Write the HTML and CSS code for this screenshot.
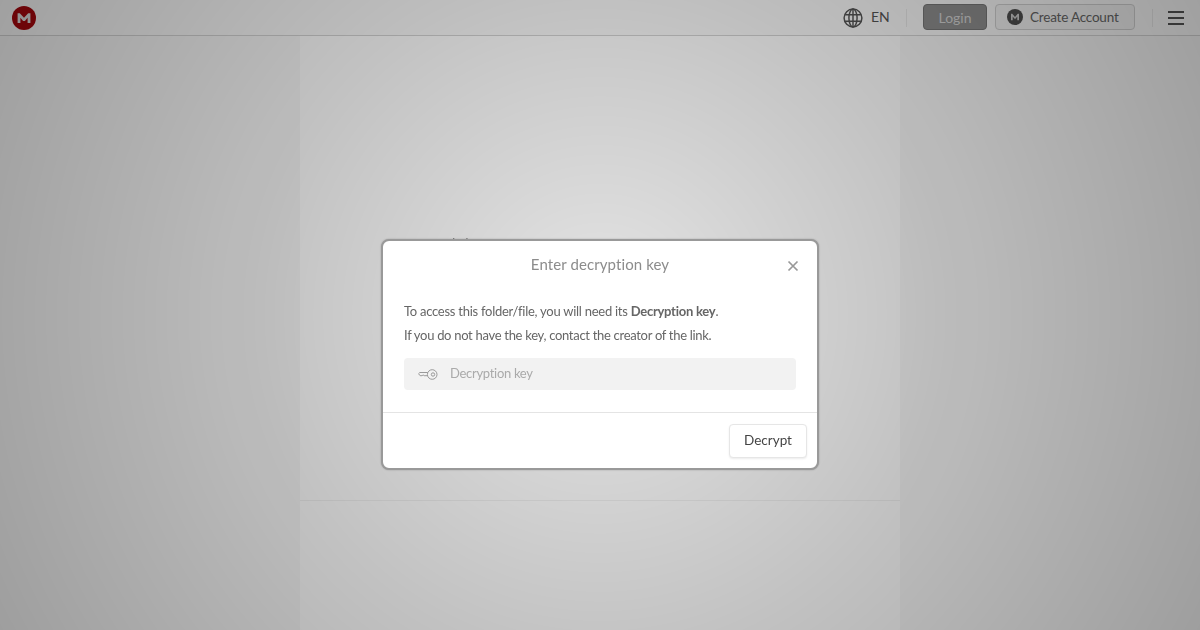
FILE: index.html
```html
<!DOCTYPE html>
<html lang="en">
<head>
<meta charset="utf-8">
<title>Enter decryption key</title>
<link rel="stylesheet" href="styles.css">
</head>
<body>
<div class="page">
  <header class="topbar">
    <svg class="logo" viewBox="0 0 24 24" width="24" height="24"><circle cx="12" cy="12" r="12" fill="#a8090f"/><path d="M5.600 17V7.200h2.200L12 11.800l4.200-4.600h2.200V17h-2.800v-5.200L12.900 15h-1.800l-2.700-3.200V17z" fill="#e0e0e0"/></svg>
    <div class="topbar-right">
      <svg class="globe" viewBox="0 0 22 22" width="20" height="20" fill="none" stroke="#555" stroke-width="1.600"><circle cx="11" cy="11" r="9.800"/><ellipse cx="11" cy="11" rx="4.500" ry="9.800"/><path d="M11 1.200v19.600M2.300 7.500h17.400M2.300 14.500h17.400"/></svg>
      <span class="lang">EN</span>
      <span class="sep sep-a"></span>
      <button class="btn-login">Login</button>
      <button class="btn-create"><svg viewBox="0 0 16 16" width="16" height="16"><circle cx="8" cy="8" r="8" fill="#4f4f4f"/><path d="M4 11.200V4.800h1.300L8 7.900l2.700-3.100H12v6.400h-1.700V7.500L8.500 9.800h-1L5.700 7.500v3.700z" fill="#ccc"/></svg>Create Account</button>
      <span class="sep sep-b"></span>
      <div class="burger"><i></i><i></i><i></i></div>
    </div>
  </header>
  <main class="content">
    <div class="column"><div class="column-top"></div><div class="column-bottom"></div></div>
  </main>
</div>
<span class="behind-title">ll</span>
<div class="overlay"></div>
<div class="modal">
  <div class="modal-head">
    <h2>Enter decryption key</h2>
    <svg class="close" viewBox="0 0 12 12" width="12" height="12" fill="none" stroke="#999" stroke-width="1.700"><path d="M1.500 1.500l9 9M10.500 1.500l-9 9"/></svg>
  </div>
  <div class="modal-body">
    <p>To access this folder/file, you will need its <b>Decryption key</b>.</p>
    <p class="line-two">If you do not have the key, contact the creator of the link.</p>
    <div class="field">
      <svg viewBox="0 0 20 11" width="20" height="11" fill="none" stroke="#999" stroke-width="1"><circle cx="14.200" cy="5.500" r="4.800"/><circle cx="15" cy="5.500" r="1.700"/><path d="M9.800 3.500H1.800L.6 4.700l1.500 2h2l1-.8 1 .8h3.700"/></svg>
      <span>Decryption key</span>
    </div>
  </div>
  <div class="modal-foot"><button class="btn-decrypt">Decrypt</button></div>
</div>
</body>
</html>
```
FILE: styles.css
```css
* { box-sizing: border-box; }
html, body { margin: 0; height: 100%; }
body { font-family: Lato, "Noto Sans", sans-serif; overflow: hidden; background: #fff; }
button { font: inherit; padding: 0; }
.page { display: flex; flex-direction: column; height: 630px; background: #f8f8f8; }
.topbar { height: 36px; flex: none; display: flex; align-items: center; justify-content: space-between; padding: 0 16px 0 12px; background: #fafafa; border-bottom: 1px solid #d4d4d4; }
.logo { display: block; }
.topbar-right { display: flex; align-items: center; height: 36px; }
.globe { margin-right: 8px; }
.lang { font-size: 14px; color: #555; width: 35px; margin-top: -3px; }
.sep { width: 1px; height: 18px; background: #e8e8e8; }
.sep-a { margin-right: 16px; }
.btn-login { width: 64px; height: 26px; margin: -1px 8px 0 0; font-size: 14px; background: #8f8f8f; color: #d4d4d4; border: 1px solid #777; border-radius: 4px; }
.btn-create { width: 140px; height: 26px; margin-top: -1px; display: flex; align-items: center; gap: 7px; padding-left: 11px; font-size: 13.500px; letter-spacing: -.2px; color: #666; background: #f2f2f2; border: 1px solid #d0d0d0; border-radius: 4px; }
.sep-b { margin: 0 15px 0 17px; }
.burger { width: 16px; display: flex; flex-direction: column; gap: 4px; }
.burger i { display: block; height: 2px; background: #555; }
.content { flex: 1; display: flex; justify-content: center; }
.column { width: 600px; background: #fff; display: flex; flex-direction: column; }
.column-top { height: 465px; border-bottom: 1px solid #f2f2f2; }
.behind-title { position: fixed; left: 452px; top: 236px; font-size: 14px; line-height: 14px; letter-spacing: 10px; color: #999; }
.overlay { position: fixed; inset: 0; background: radial-gradient(circle 680px at 50% 50%, rgba(0,0,0,.1) 0%, rgba(0,0,0,.24) 50%, rgba(0,0,0,.36) 100%); }
.modal { position: fixed; left: 381px; top: 239px; width: 438px; height: 231px; display: flex; flex-direction: column; background: #fff; border: 2px solid #999; border-radius: 8px; color: #666; box-shadow: 0 0 2px rgba(0,0,0,.25); }
.modal-head { height: 47px; position: relative; display: flex; align-items: center; justify-content: center; }
.modal-head h2 { margin: -2px 0 0; font-size: 15px; letter-spacing: .1px; font-weight: 400; color: #8c8c8c; }
.close { position: absolute; right: 18px; top: 19px; }
.modal-body { padding: 11px 21px 0; flex: 1; border-bottom: 1px solid #e4e4e4; }
.modal-body p { margin: 0; font-size: 13px; letter-spacing: -.26px; line-height: 24px; color: #666; }
.modal-body .line-two { letter-spacing: -.3px; }
.modal-body b { font-weight: 700; }
.field { margin-top: 11px; height: 32px; display: flex; align-items: center; gap: 12px; padding-left: 14px; background: #f2f2f2; border-radius: 4px; font-size: 13px; letter-spacing: -.3px; color: #aaa; }
.field span { margin-top: -2px; }
.modal-foot { height: 55px; flex: none; display: flex; justify-content: flex-end; align-items: center; padding-right: 10px; }
.btn-decrypt { width: 78px; height: 34px; padding-bottom: 2px; background: #fff; border: 1px solid #e6e6e6; border-radius: 4px; font-size: 13.500px; color: #444; box-shadow: 0 1px 2px rgba(0,0,0,.08); }
```
